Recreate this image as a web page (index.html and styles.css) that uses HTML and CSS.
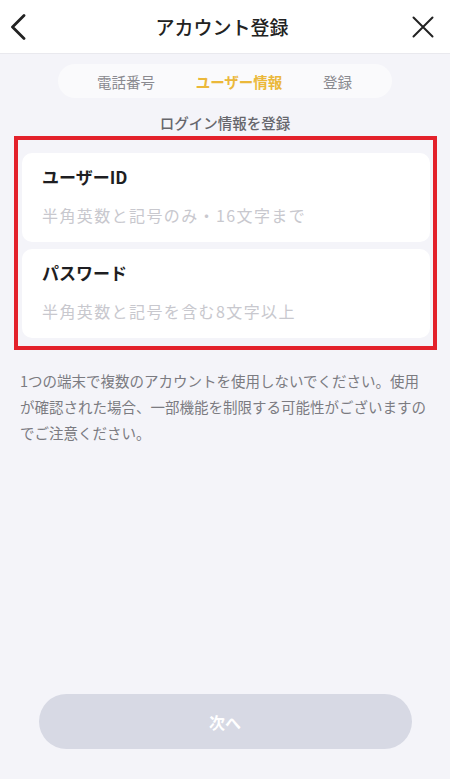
FILE: index.html
```html
<!DOCTYPE html>
<html lang="ja">
<head>
    <meta charset="UTF-8">
    <meta name="viewport" content="width=device-width, initial-scale=1.0">
    <title>アカウント登録</title>
    <link rel="stylesheet" href="styles.css">
</head>
<body>
    <header class="topbar">
        <a href="#" class="icon-btn back">
            <svg width="16" height="26" viewBox="0 0 16 26"><path d="M14 1.5 L2.5 13 L14 24.5" fill="none" stroke="#222" stroke-width="2.8" stroke-linecap="round" stroke-linejoin="round"/></svg>
        </a>
        <h1>アカウント登録</h1>
        <a href="#" class="icon-btn close">
            <svg width="22" height="22" viewBox="0 0 22 22"><path d="M1.5 1.5 L20.5 20.5 M20.5 1.5 L1.5 20.5" fill="none" stroke="#222" stroke-width="2" stroke-linecap="round"/></svg>
        </a>
    </header>

    <main class="content">
        <nav class="steps">
            <span>電話番号</span>
            <span class="active">ユーザー情報</span>
            <span>登録</span>
        </nav>

        <p class="section-title">ログイン情報を登録</p>

        <div class="highlight">
            <div class="field-card">
                <label>ユーザーID</label>
                <input type="text" placeholder="半角英数と記号のみ・16文字まで">
            </div>
            <div class="field-card">
                <label>パスワード</label>
                <input type="password" placeholder="半角英数と記号を含む8文字以上">
            </div>
        </div>

        <p class="note">1つの端末で複数のアカウントを使用しないでください。使用が確認された場合、一部機能を制限する可能性がございますのでご注意ください。</p>

        <button class="next-btn" disabled>次へ</button>
    </main>
</body>
</html>
```

FILE: styles.css
```css
* { margin: 0; padding: 0; box-sizing: border-box; }
body {
    font-family: "Noto Sans CJK JP", "Noto Sans", sans-serif;
    background: #f4f4f9;
    color: #222;
    min-height: 779px;
    display: flex;
    flex-direction: column;
}
.topbar {
    height: 54px;
    background: #fff;
    border-bottom: 1px solid #e9e9ee;
    display: flex;
    align-items: center;
    justify-content: space-between;
    padding: 0 16px 0 10px;
}
.topbar h1 {
    font-size: 19px;
    font-weight: 500;
    color: #222;
    margin-left: 6px;
}
.icon-btn {
    display: flex;
    align-items: center;
}
.content {
    flex: 1;
    display: flex;
    flex-direction: column;
    align-items: center;
}
.steps {
    margin-top: 10px;
    width: 334px;
    height: 34px;
    border-radius: 17px;
    background: #fafafc;
    display: flex;
    align-items: center;
    justify-content: space-between;
    padding: 0 40px 0 39px;
    font-size: 14.5px;
    color: #8a8a90;
}
.steps .active {
    color: #ebb83a;
    font-weight: 700;
}
.section-title {
    margin-top: 14px;
    font-size: 14.5px;
    font-weight: 500;
    color: #66666c;
    line-height: 22px;
}
.highlight {
    margin-top: 2px;
    width: 423px;
    margin-left: 1px;
    border: 4px solid #e3212b;
    padding: 13px 3px 8px 4px;
    display: flex;
    flex-direction: column;
    gap: 7px;
}
.field-card {
    background: #fff;
    border-radius: 10px;
    height: 89px;
    padding: 11px 20px 0;
    display: flex;
    flex-direction: column;
}
.field-card label {
    font-size: 17px;
    font-weight: 700;
    color: #1e1e22;
    line-height: 26px;
}
.field-card input {
    margin-top: 13px;
    border: none;
    outline: none;
    background: transparent;
    font-family: inherit;
    font-size: 16px;
    letter-spacing: 1.4px;
    line-height: 24px;
    color: #222;
}
.field-card input::placeholder {
    color: #c8c8ce;
}
.note {
    align-self: stretch;
    margin-top: 18px;
    padding: 0 20px;
    font-size: 14.5px;
    line-height: 26px;
    color: #7b7b81;
}
.next-btn {
    margin-top: auto;
    margin-bottom: 30px;
    width: 373px;
    height: 55px;
    border: none;
    border-radius: 28px;
    background: #d7d9e4;
    color: #fff;
    font-family: inherit;
    font-size: 16px;
    font-weight: 700;
}
```
